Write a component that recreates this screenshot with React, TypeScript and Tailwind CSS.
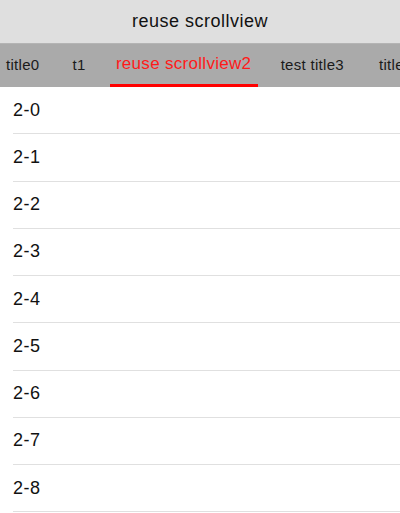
const tabs = ["title0", "t1", "reuse scrollview2", "test title3", "title4"];
const rows = Array.from({ length: 10 }, (_, i) => `2-${i}`);

export default function App() {
  const active = 2;
  return (
    <div className="h-[513px] w-[400px] overflow-hidden bg-white font-['Liberation_Sans',Arial,sans-serif] text-[#111]">
      <div className="flex h-[44px] items-center justify-center border-b border-[#b4b4b4] bg-[#dfdfdf] text-[18px] tracking-[0.5px]">
        reuse scrollview
      </div>
      <div className="flex h-[43px] items-stretch overflow-hidden whitespace-nowrap bg-[#aaaaaa] text-[15px] tracking-[0.3px] text-[#1a1a1a]">
        <div className="ml-[6px] flex shrink-0 items-center">{tabs[0]}</div>
        <div className="ml-[33px] flex shrink-0 items-center">{tabs[1]}</div>
        <div
          className={`ml-[24px] flex w-[148px] shrink-0 flex-col justify-end ${
            active === 2 ? "text-[#ff1a1a]" : ""
          }`}
        >
          <span className="flex flex-1 items-center justify-center text-[17px]">
            {tabs[2]}
          </span>
          <span className="h-[3px] bg-[#ff0000]" />
        </div>
        <div className="ml-[23px] flex shrink-0 items-center">{tabs[3]}</div>
        <div className="ml-[35px] flex shrink-0 items-center">{tabs[4]}</div>
      </div>
      <ul>
        {rows.map((r) => (
          <li key={r} className="pl-[13px]">
            <div className="flex h-[47.25px] items-center border-b border-[#e0e0e0] text-[18px] tracking-[0.5px]">
              {r}
            </div>
          </li>
        ))}
      </ul>
    </div>
  );
}
